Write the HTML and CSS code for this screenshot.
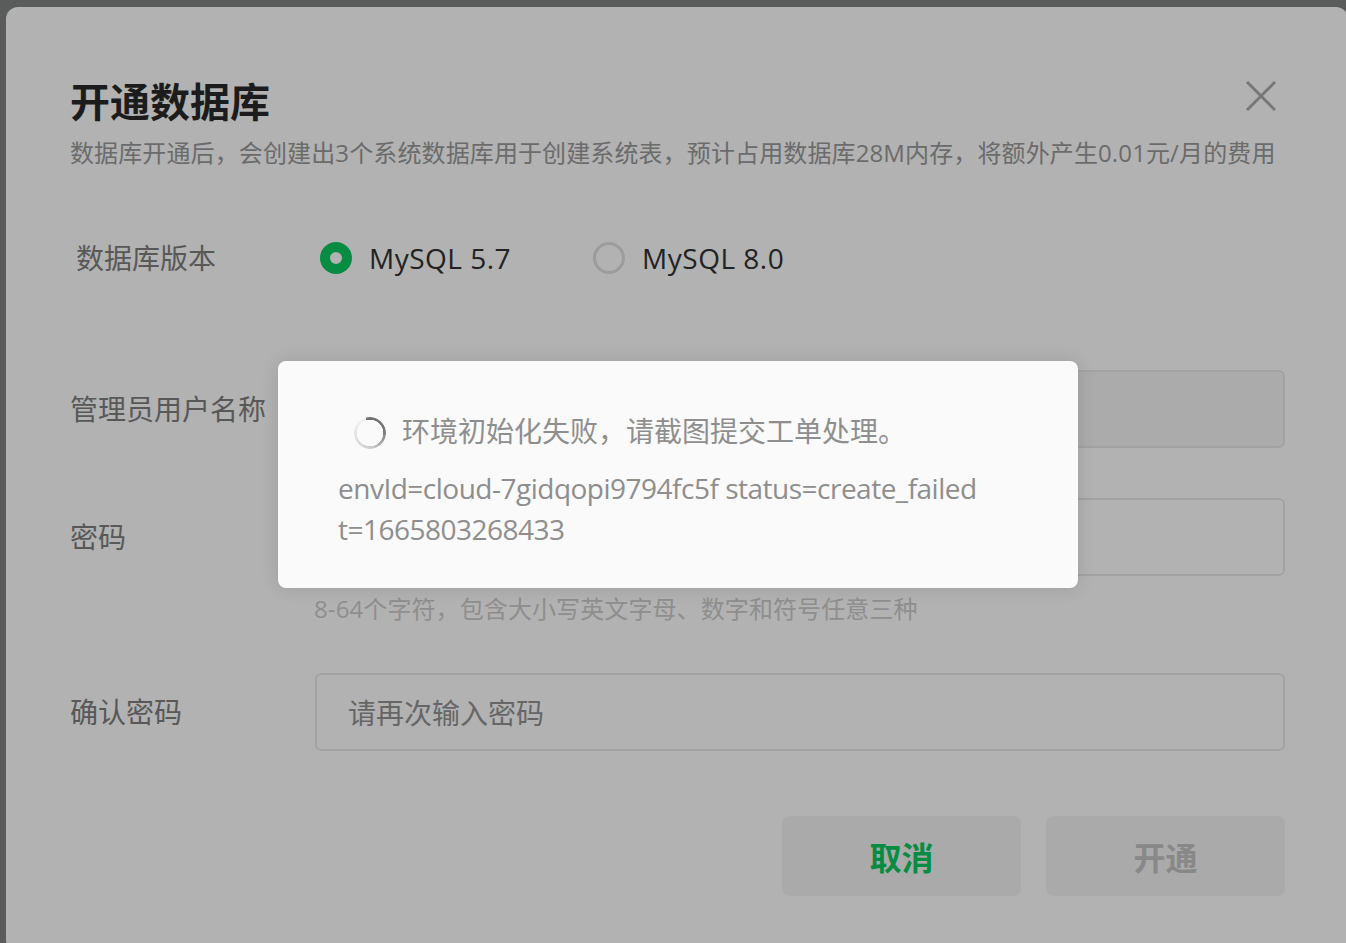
FILE: index.html
```html
<!DOCTYPE html>
<html lang="zh-CN">
<head>
<meta charset="utf-8">
<title>开通数据库</title>
<link rel="stylesheet" href="styles.css">
</head>
<body>
<div class="dialog">
  <div class="header">
    <h1 class="title">开通数据库</h1>
    <button class="close" aria-label="关闭">
      <svg width="30" height="30" viewBox="0 0 30 30"><path d="M1 1 L29 29 M29 1 L1 29" stroke="#777" stroke-width="3" fill="none"/></svg>
    </button>
  </div>
  <p class="subtitle">数据库开通后，会创建出3个系统数据库用于创建系统表，预计占用数据库28M内存，将额外产生0.01元/月的费用</p>

  <div class="row version-row">
    <div class="label version-label">数据库版本</div>
    <div class="radios">
      <div class="radio"><span class="dot checked"></span><span class="radio-text">MySQL 5.7</span></div>
      <div class="radio"><span class="dot"></span><span class="radio-text">MySQL 8.0</span></div>
    </div>
  </div>

  <div class="row form-row first">
    <div class="label">管理员用户名称</div>
    <div class="input disabled"></div>
  </div>

  <div class="row form-row pwd">
    <div class="label">密码</div>
    <div class="input"></div>
  </div>
  <div class="hint">8-64个字符，包含大小写英文字母、数字和符号任意三种</div>

  <div class="row form-row confirm">
    <div class="label">确认密码</div>
    <div class="input"><span class="placeholder">请再次输入密码</span></div>
  </div>

  <div class="actions">
    <button class="btn cancel">取消</button>
    <button class="btn ok">开通</button>
  </div>

  <div class="toast">
    <div class="toast-line1"><span class="spinner"></span><span>环境初始化失败，请截图提交工单处理。</span></div>
    <div class="toast-detail">envId=cloud-7gidqopi9794fc5f status=create_failed t=1665803268433</div>
  </div>
</div>
</body>
</html>
```
FILE: styles.css
```css
html, body {
  margin: 0;
  padding: 0;
  background: #5a5b5b;
  overflow: hidden;
  height: 943px;
}
body {
  font-family: "Open Sans", "Noto Sans CJK SC", sans-serif;
}
.dialog {
  position: relative;
  box-sizing: border-box;
  margin: 7px 0 0 6px;
  width: 1342px;
  height: 945px;
  background: #b2b2b2;
  border-radius: 12px;
  padding: 65px 63px 0 64px;
}
.header {
  display: flex;
  justify-content: space-between;
  align-items: flex-start;
}
.title {
  margin: 0;
  font-family: "Noto Sans CJK SC", sans-serif;
  font-size: 40px;
  line-height: 56px;
  font-weight: 700;
  color: #1c1c1c;
}
.close {
  margin: 9px 9px 0 0;
  padding: 0;
  border: 0;
  background: none;
  width: 30px;
  height: 30px;
  display: block;
}
.close svg { display: block; }
.subtitle {
  margin: 8px 0 0;
  font-size: 24px;
  line-height: 34px;
  color: #6b6b6b;
  white-space: nowrap;
  letter-spacing: 0.12px;
}
.row {
  display: flex;
  align-items: center;
}
.label {
  width: 245px;
  flex: none;
  font-size: 28px;
  line-height: 40px;
  color: #585858;
}
.version-row {
  margin-top: 58px;
  height: 60px;
}
.version-label { padding-left: 6px; box-sizing: border-box; }
.radios {
  display: flex;
  align-items: center;
  gap: 82px;
  padding-left: 5px;
}
.radio {
  display: flex;
  align-items: center;
  gap: 17px;
}
.dot {
  box-sizing: border-box;
  width: 32px;
  height: 32px;
  border-radius: 50%;
  border: 3px solid #9c9c9c;
}
.dot.checked {
  border: 10px solid #078c43;
}
.radio-text {
  font-size: 28px;
  line-height: 40px;
  color: #222;
  letter-spacing: 0.5px;
}
.form-row.first { margin-top: 82px; }
.form-row.pwd { margin-top: 50px; }
.form-row.confirm { margin-top: 47px; }
.input {
  box-sizing: border-box;
  flex: 1;
  height: 78px;
  border: 2px solid #a2a2a2;
  border-radius: 6px;
  display: flex;
  align-items: center;
  padding-left: 31px;
}
.input.disabled { background: #ababab; }
.placeholder {
  font-size: 28px;
  color: #666;
}
.hint {
  margin-top: 16px;
  padding-left: 244px;
  font-size: 24px;
  line-height: 34px;
  color: #8e8e8e;
  letter-spacing: 0.1px;
}
.actions {
  margin-top: 65px;
  display: flex;
  justify-content: flex-end;
  gap: 25px;
}
.btn {
  width: 239px;
  height: 80px;
  border: 0;
  border-radius: 8px;
  background: #aaaaaa;
  font-family: "Noto Sans CJK SC", sans-serif;
  font-size: 32px;
  font-weight: 700;
}
.btn.cancel { color: #078c43; }
.btn.ok { color: #888; }
.toast {
  position: absolute;
  left: 272px;
  top: 354px;
  box-sizing: border-box;
  width: 800px;
  height: 227px;
  background: #fafafa;
  border-radius: 8px;
  box-shadow: 0 0 18px rgba(0,0,0,0.12);
  padding: 49px 60px 0 60px;
  font-size: 28px;
  color: #8e8e8e;
}
.toast-line1 {
  display: flex;
  align-items: center;
  gap: 16px;
  padding-left: 16px;
  line-height: 42px;
}
.spinner {
  flex: none;
  width: 32px;
  height: 32px;
  border-radius: 50%;
  background: conic-gradient(from -15deg, #6f6f6f 0deg, #7a7a7a 100deg, #c8c8c8 180deg, #e2e2e2 270deg, #f2f2f2 345deg);
  -webkit-mask: radial-gradient(farthest-side, transparent calc(100% - 3px), #000 calc(100% - 2.5px));
  mask: radial-gradient(farthest-side, transparent calc(100% - 3px), #000 calc(100% - 2.5px));
  margin-top: 3px;
}
.toast-detail {
  margin-top: 16px;
  line-height: 41px;
  color: #8e8e8e;
  letter-spacing: -0.5px;
}
```
